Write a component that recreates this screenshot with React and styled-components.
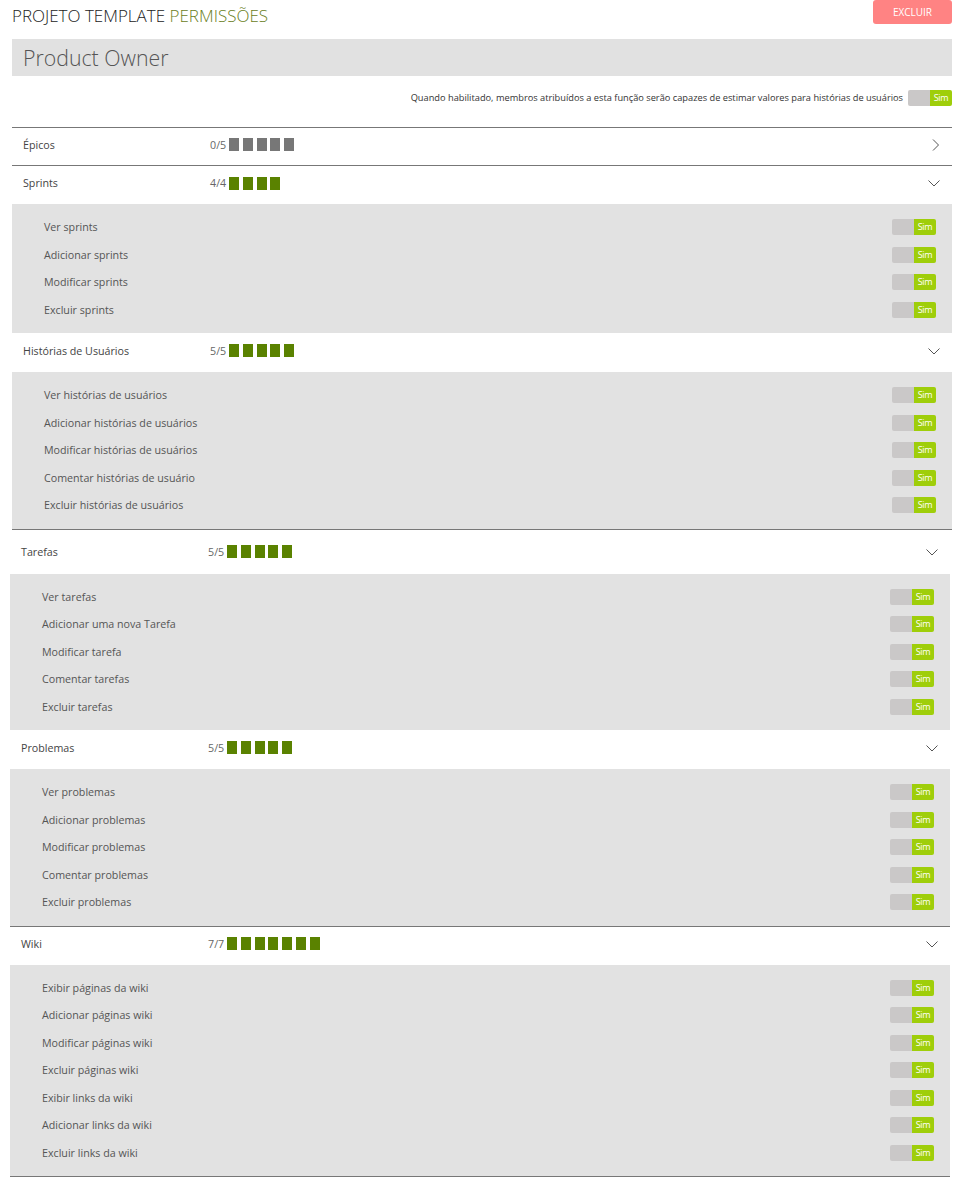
import React from "react";
import styled, { createGlobalStyle } from "styled-components";

const Global = createGlobalStyle`
  * { box-sizing: border-box; }
  html, body { margin: 0; padding: 0; background: #fff; }
  body { font-family: "Open Sans", "Noto Sans", sans-serif; color: #444; }
`;

const Page = styled.div`
  width: 972px;
  padding: 0 20px 14px 12px;
`;

const TopBar = styled.div`
  display: flex;
  align-items: flex-start;
  justify-content: space-between;
  height: 39px;
`;

const Title = styled.h1`
  margin: 5px 0 0;
  font-size: 17px;
  font-weight: 300;
  color: #222;
  line-height: 22px;
`;

const TitleAccent = styled.span`
  color: #6a801c;
`;

const DangerButton = styled.button`
  width: 79px;
  height: 24px;
  border: none;
  border-radius: 3px;
  background: #ff8383;
  color: #fff;
  font-family: inherit;
  font-size: 10px;
  text-transform: uppercase;
  padding: 0;
`;

const RoleBar = styled.div`
  height: 37px;
  background: #e1e1e1;
  display: flex;
  align-items: center;
  padding-left: 11px;
  font-size: 21.3px;
  font-weight: 300;
  color: #555;
`;

const EstimateRow = styled.div`
  display: flex;
  justify-content: flex-end;
  align-items: flex-start;
  gap: 5px;
  height: 51px;
  padding-top: 14px;
  font-size: 9.25px;
  line-height: 16px;
  color: #333;
`;

const Group = styled.div`
  margin-left: ${(p) => (p.$shift ? -2 : 0)}px;
  margin-right: ${(p) => (p.$shift ? 2 : 0)}px;
  border-top: ${(p) => (p.$top ? "1px solid #777" : "none")};
`;

const Header = styled.div`
  display: flex;
  align-items: center;
  height: ${(p) => p.$h || 38}px;
  padding: 0 11px ${(p) => (p.$lift === undefined ? 4 : p.$lift)}px 11px;
  background: #fff;
  border-bottom: ${(p) => (p.$line ? "1px solid #777" : "none")};
`;

const SectionName = styled.div`
  width: 187px;
  font-size: 10.7px;
  color: #444;
`;

const Counter = styled.div`
  display: flex;
  align-items: center;
  flex: 1;
  font-size: 10.7px;
  color: #666;
`;

const CounterText = styled.span`
  margin-right: 3px;
`;

const Bars = styled.div`
  display: flex;
  gap: 3.75px;
`;

const Bar = styled.span`
  width: 10px;
  height: 13px;
  background: ${(p) => (p.$on ? "#5a8200" : "#777")};
`;

const Panel = styled.div`
  background: #e2e2e2;
  padding: 9.5px 16px 9.5px 32px;
  border-bottom: ${(p) => (p.$line ? "1px solid #777" : "none")};
`;

const Item = styled.div`
  height: 27.5px;
  display: flex;
  align-items: center;
  justify-content: space-between;
  font-size: 10.7px;
  color: #555;
`;

const Toggle = styled.div`
  display: flex;
  width: 44px;
  height: 16px;
  border-radius: 2px;
  overflow: hidden;
  flex-shrink: 0;
`;

const ToggleOff = styled.span`
  flex: 1;
  background: #cac8c8;
`;

const ToggleOn = styled.span`
  width: 22px;
  background: #9fce0a;
  color: #fff;
  font-size: 9px;
  line-height: 16px;
  display: flex;
  align-items: center;
  justify-content: center;
  letter-spacing: -0.3px;
`;

const Switch = () => (
  <Toggle>
    <ToggleOff />
    <ToggleOn>Sim</ToggleOn>
  </Toggle>
);

const ChevronRight = () => (
  <svg width="12" height="14" viewBox="0 0 12 14">
    <path d="M4 1.5 L9.5 7 L4 12.5" fill="none" stroke="#555" strokeWidth="1" />
  </svg>
);

const ChevronDown = () => (
  <svg width="14" height="10" viewBox="0 0 14 10">
    <path d="M1.5 2.5 L7 8 L12.5 2.5" fill="none" stroke="#555" strokeWidth="1" />
  </svg>
);

const Section = ({ name, total, on, items, open, headerLine, panelLine, h, lift }) => (
  <>
    <Header $line={headerLine} $h={h} $lift={lift}>
      <SectionName>{name}</SectionName>
      <Counter>
        <CounterText>
          {on}/{total}
        </CounterText>
        <Bars>
          {Array.from({ length: total }).map((_, i) => (
            <Bar key={i} $on={i < on} />
          ))}
        </Bars>
      </Counter>
      {open ? <ChevronDown /> : <ChevronRight />}
    </Header>
    {open && (
      <Panel $line={panelLine}>
        {items.map((t) => (
          <Item key={t}>
            {t}
            <Switch />
          </Item>
        ))}
      </Panel>
    )}
  </>
);

export default function App() {
  return (
    <Page>
      <Global />
      <TopBar>
        <Title>
          PROJETO TEMPLATE <TitleAccent>PERMISSÕES</TitleAccent>
        </Title>
        <DangerButton>Excluir</DangerButton>
      </TopBar>
      <RoleBar>Product Owner</RoleBar>
      <EstimateRow>
        Quando habilitado, membros atribuídos a esta função serão capazes de estimar valores para histórias de usuários
        <Switch />
      </EstimateRow>
      <Group $top>
        <Section name="Épicos" total={5} on={0} headerLine />
        <Section
          name="Sprints"
          total={4}
          on={4}
          open
          items={["Ver sprints", "Adicionar sprints", "Modificar sprints", "Excluir sprints"]}
        />
        <Section
          name="Histórias de Usuários"
          total={5}
          on={5}
          open
          h={39}
          panelLine
          items={[
            "Ver histórias de usuários",
            "Adicionar histórias de usuários",
            "Modificar histórias de usuários",
            "Comentar histórias de usuário",
            "Excluir histórias de usuários",
          ]}
        />
      </Group>
      <Group $shift>
        <Section
          name="Tarefas"
          total={5}
          on={5}
          open
          h={44}
          lift={0}
          items={["Ver tarefas", "Adicionar uma nova Tarefa", "Modificar tarefa", "Comentar tarefas", "Excluir tarefas"]}
        />
        <Section
          name="Problemas"
          total={5}
          on={5}
          open
          h={39}
          panelLine
          items={["Ver problemas", "Adicionar problemas", "Modificar problemas", "Comentar problemas", "Excluir problemas"]}
        />
        <Section
          name="Wiki"
          total={7}
          on={7}
          open
          h={38}
          panelLine
          items={[
            "Exibir páginas da wiki",
            "Adicionar páginas wiki",
            "Modificar páginas wiki",
            "Excluir páginas wiki",
            "Exibir links da wiki",
            "Adicionar links da wiki",
            "Excluir links da wiki",
          ]}
        />
      </Group>
    </Page>
  );
}
